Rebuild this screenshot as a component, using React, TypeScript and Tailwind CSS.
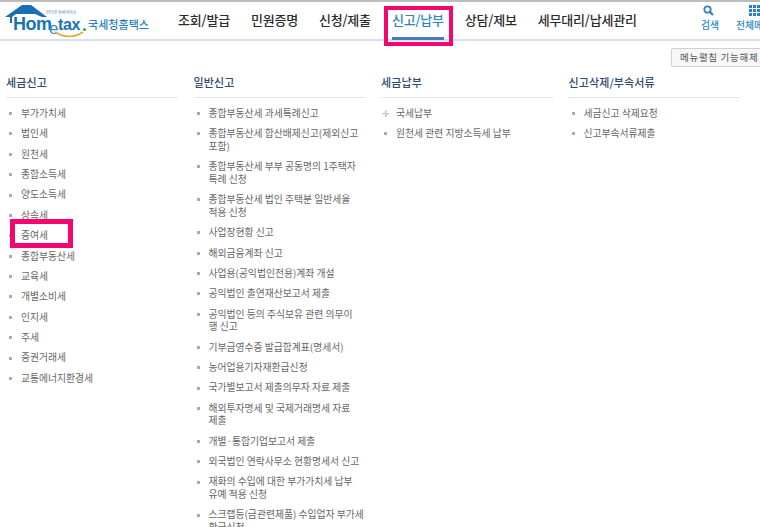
const fontStack = '"Noto Sans CJK KR", "Liberation Sans", sans-serif';

const navItems = ["조회/발급", "민원증명", "신청/제출", "신고/납부", "상담/제보", "세무대리/납세관리"];

const columns = [
  {
    title: "세금신고",
    items: [
      "부가가치세",
      "법인세",
      "원천세",
      "종합소득세",
      "양도소득세",
      "상속세",
      "증여세",
      "종합부동산세",
      "교육세",
      "개별소비세",
      "인지세",
      "주세",
      "증권거래세",
      "교통에너지환경세",
    ],
  },
  {
    title: "일반신고",
    items: [
      "종합부동산세 과세특례신고",
      "종합부동산세 합산배제신고(제외신고\n포함)",
      "종합부동산세 부부 공동명의 1주택자\n특례 신청",
      "종합부동산세 법인 주택분 일반세율\n적용 신청",
      "사업장현황 신고",
      "해외금융계좌 신고",
      "사업용(공익법인전용)계좌 개설",
      "공익법인 출연재산보고서 제출",
      "공익법인 등의 주식보유 관련 의무이\n행 신고",
      "기부금영수증 발급합계표(명세서)",
      "농어업용기자재환급신청",
      "국가별보고서 제출의무자 자료 제출",
      "해외투자명세 및 국제거래명세 자료\n제출",
      "개별·통합기업보고서 제출",
      "외국법인 연락사무소 현황명세서 신고",
      "재화의 수입에 대한 부가가치세 납부\n유예 적용 신청",
      "스크랩등(금관련제품) 수입업자 부가세\n환급신청",
    ],
  },
  { title: "세금납부", items: ["국세납부", "원천세 관련 지방소득세 납부"] },
  { title: "신고삭제/부속서류", items: ["세금신고 삭제요청", "신고부속서류제출"] },
];

const Logo = () => (
  <div className="relative w-[150px] h-[38px] shrink-0">
    <svg width="50" height="22" viewBox="0 0 50 22" className="absolute left-0 top-[1px]">
      <path
        d="M5 13 L22 1 L31 1 L47 13 L42 13 L35 10 L16 10 L12 13 L12 19 L10 19 L10 13 Z"
        fill="#1c6fb5"
      />
    </svg>
    <span className="absolute left-[46px] top-[7px] text-[4px] leading-[5px] text-[#3a7fc0] whitespace-nowrap">
      인터넷 납세서비스
    </span>
    <span className="absolute left-[13px] top-[11px] text-[18px] leading-[20px] font-bold text-[#1673b8] tracking-[-0.5px] [font-family:'Liberation_Sans',sans-serif]">
      Hom
    </span>
    <span className="absolute left-[49px] top-[18px] text-[17px] leading-[15px] text-[#2a8cc9] [font-family:'Liberation_Sans',sans-serif]">
      e
    </span>
    <span className="absolute left-[58px] top-[13px] text-[16px] leading-[18px] font-bold text-[#1673b8] tracking-[-0.4px] [font-family:'Liberation_Sans',sans-serif]">
      tax
    </span>
    <span className="absolute left-[83px] top-[25px] w-[3px] h-[3px] rounded-full bg-[#3aa93a]" />
    <svg width="34" height="8" viewBox="0 0 34 8" className="absolute left-[54px] top-[28px]">
      <path d="M1 1 Q15 10 29 1" fill="none" stroke="#e8a63a" strokeWidth="1.5" />
    </svg>
    <span className="absolute left-[88px] top-[14px] text-[11px] leading-[14px] font-medium text-[#2a7fc0] tracking-[0.05px] whitespace-nowrap">
      국세청홈택스
    </span>
  </div>
);

export default function App() {
  return (
    <div className="relative w-[760px] h-[527px] overflow-hidden bg-white" style={{ fontFamily: fontStack }}>
      <div className="h-[41px] border-t-[2px] border-t-[#bdbdbd] border-b-[2px] border-b-[#d5e2ee] flex">
        <div className="pt-[1px] w-[178px] shrink-0">
          <Logo />
        </div>
        <nav className="flex gap-[21px] h-full">
          {navItems.map((item) => (
            <div key={item} className="relative h-full flex items-center pb-[1px]">
              <span
                className={
                  "text-[13px] leading-[16px] font-medium whitespace-nowrap tracking-[-0.2px] " +
                  (item === "신고/납부" ? "text-[#2a86c4]" : "text-[#2b2b2b]")
                }
              >
                {item}
              </span>
              {item === "신고/납부" && <div className="absolute left-0 right-0 bottom-[-1px] h-[3px] bg-[#4a7ab8]" />}
            </div>
          ))}
        </nav>
        <div className="ml-auto flex gap-[17px] shrink-0 w-[59px] text-[#2a86c4] text-[9.8px] leading-[12px] font-medium">
          <div className="flex flex-col items-center pt-[3px] shrink-0">
            <svg width="12" height="11" viewBox="0 0 12 11" className="-ml-[3px]">
              <circle cx="4.5" cy="4.5" r="3.2" fill="none" stroke="#2f7fc4" strokeWidth="1.8" />
              <path d="M7 7 L10 10" stroke="#2f7fc4" strokeWidth="2.2" />
            </svg>
            <span className="mt-[3px] whitespace-nowrap">검색</span>
          </div>
          <div className="flex flex-col items-center pt-[3px] shrink-0">
            <div className="grid grid-cols-3 gap-[1px] w-[11px]">
              {Array.from({ length: 9 }).map((_, i) => (
                <div key={i} className="w-[3px] h-[3px] bg-[#2f7fc4]" />
              ))}
            </div>
            <span className="mt-[3px] whitespace-nowrap">전체메뉴</span>
          </div>
        </div>
      </div>

      <div className="flex justify-end h-[31px] pt-[7px]">
        <div className="w-[110px] -mr-[21px] shrink-0 h-[19px] border border-[#d0d0d0] rounded-[2px] bg-[#f7f7f7] pl-[8px] text-[9.5px] leading-[17px] text-[#555] tracking-[0.7px] whitespace-nowrap">
          메뉴펼침 기능해제
        </div>
      </div>

      <div className="grid grid-cols-[172px_172px_172px_172px] gap-x-[15.5px] pl-[6px]">
        {columns.map((col) => (
          <section key={col.title}>
            <h2 className="h-[26px] border-b border-[#e4e4e4] text-[11px] leading-[20px] font-medium text-[#2e4a6e] tracking-[0.1px]">
              {col.title}
            </h2>
            <ul className="pt-[5px]">
              {col.items.map((item) => (
                <li
                  key={item}
                  className="relative py-[3.9px] pl-[15px] text-[9.8px] leading-[12.6px] text-[#666] whitespace-pre-line"
                >
                  {item === "국세납부" ? (
                    <span className="absolute left-[1px] top-[6px] text-[#aaa] text-[9px] leading-[9px]">✛</span>
                  ) : (
                    <span className="absolute left-[3px] top-[9px] w-[3px] h-[3px] bg-[#aaa]" />
                  )}
                  {item}
                </li>
              ))}
            </ul>
          </section>
        ))}
      </div>

      <div className="absolute left-[384px] top-[6px] w-[69px] h-[40px] border-[4px] border-[#f5056e]" />
      <div className="absolute left-[10px] top-[219px] w-[63px] h-[29px] border-[5px] border-[#f5056e]" />
    </div>
  );
}
